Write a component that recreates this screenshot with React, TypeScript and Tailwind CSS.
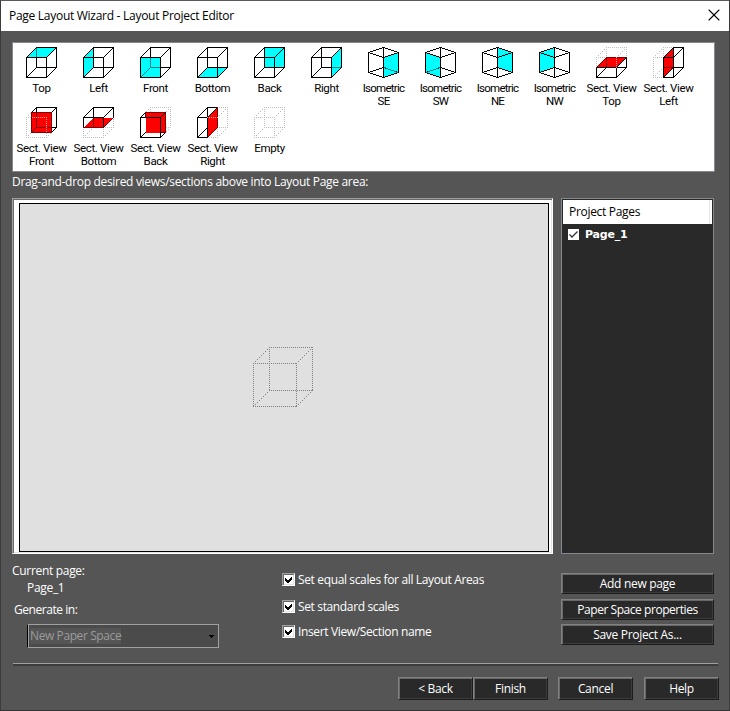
import { type ReactNode } from "react";
import { X } from "lucide-react";

type Line = [number, number, number, number];
type IconProps = { fill?: string; solid?: Line[]; dotted?: Line[]; over?: Line[]; overColor?: string; marks?: Line[]; color?: string };

// wireframe drawn on a 31px grid: front face 0,10-20,30 and back face 10,0-30,20
const cube: Line[] = [
  [0, 10, 20, 10], [20, 10, 20, 30], [0, 30, 20, 30], [0, 10, 0, 30],
  [10, 0, 30, 0], [30, 0, 30, 20], [10, 20, 30, 20], [10, 0, 10, 20],
  [0, 10, 10, 0], [20, 10, 30, 0], [20, 30, 30, 20], [0, 30, 10, 20],
];

const iso: Line[] = [
  [0, 5, 15, 0], [30, 5, 15, 0], [30, 5, 15, 10], [0, 5, 15, 10],
  [0, 25, 15, 20], [30, 25, 15, 20], [30, 25, 15, 30], [0, 25, 15, 30],
  [0, 5, 0, 25], [30, 5, 30, 25], [15, 0, 15, 30],
];

const bigCube: Line[] = [
  [0, 16, 43, 16], [43, 16, 43, 59], [0, 59, 43, 59], [0, 16, 0, 59],
  [16, 0, 59, 0], [59, 0, 59, 43], [16, 43, 59, 43], [16, 0, 16, 43],
  [0, 16, 16, 0], [43, 16, 59, 0], [43, 59, 59, 43], [0, 59, 16, 43],
];

// unsmoothed one pixel lines; step 2 leaves every other pixel out
const toPixels = (lines: Line[], step = 1) => {
  let d = "";
  for (const [x1, y1, x2, y2] of lines) {
    const n = Math.max(Math.abs(x2 - x1), Math.abs(y2 - y1));
    for (let i = 0; i <= n; i += step) {
      d += `M${Math.round(x1 + ((x2 - x1) * i) / n)} ${Math.round(y1 + ((y2 - y1) * i) / n)}h1v1h-1z`;
    }
  }
  return d;
};

const WireIcon = ({ fill, solid = [], dotted = [], over = [], overColor = "#008080", marks = [], color = "#f00" }: IconProps) => (
  <svg width="31" height="31" viewBox="0 0 31 31" shapeRendering="crispEdges" className="shrink-0">
    <path d={toPixels(dotted, 2)} fill="#c0c0c0" />
    {fill && <polygon points={fill} fill={color} transform="translate(0.5 0.5)" />}
    <path d={toPixels(solid)} fill="#000" />
    <path d={toPixels(over)} fill={overColor} />
    <path d={toPixels(marks, 2)} fill="#ffa0a0" />
  </svg>
);

const cyan = "#0ff";

const views: { label: string; icon: ReactNode }[] = [
  { label: "Top", icon: <WireIcon color={cyan} fill="0,10 10,0 30,0 20,10" solid={cube} over={[[10, 1, 10, 9]]} /> },
  { label: "Left", icon: <WireIcon color={cyan} fill="0,10 10,0 10,20 0,30" solid={cube} /> },
  { label: "Front", icon: <WireIcon color={cyan} fill="0,10 20,10 20,30 0,30" solid={cube} over={[[10, 11, 10, 20], [10, 20, 19, 20], [1, 29, 10, 20]]} /> },
  { label: "Bottom", icon: <WireIcon color={cyan} fill="0,30 10,20 30,20 20,30" solid={cube} /> },
  { label: "Back", icon: <WireIcon color={cyan} fill="10,0 30,0 30,20 10,20" solid={cube} /> },
  { label: "Right", icon: <WireIcon color={cyan} fill="20,10 30,0 30,20 20,30" solid={cube} over={[[21, 20, 29, 20]]} /> },
  { label: "Isometric SE", icon: <WireIcon color={cyan} fill="15,10 30,5 30,25 15,30" solid={iso} over={[[16, 20, 29, 25]]} /> },
  { label: "Isometric SW", icon: <WireIcon color={cyan} fill="0,5 15,10 15,30 0,25" solid={iso} over={[[1, 25, 14, 20]]} /> },
  { label: "Isometric NE", icon: <WireIcon color={cyan} fill="15,0 30,5 30,25 15,20" solid={iso} /> },
  { label: "Isometric NW", icon: <WireIcon color={cyan} fill="15,0 0,5 0,25 15,20" solid={iso} /> },
  {
    label: "Sect. View Top",
    icon: <WireIcon fill="0,20 10,10 30,10 20,20" dotted={cube} overColor="#800000" over={[[10, 11, 10, 19], [10, 10, 30, 10], [0, 20, 10, 10]]} marks={[[20, 10, 20, 20]]}
      solid={[[0, 20, 30, 20], [0, 20, 0, 30], [0, 30, 20, 30], [20, 20, 20, 30], [20, 30, 30, 20], [30, 10, 30, 20], [20, 20, 30, 10], [0, 30, 10, 20]]} />,
  },
  {
    label: "Sect. View Left",
    icon: <WireIcon fill="10,10 20,0 20,20 10,30" dotted={cube} overColor="#800000" over={[[11, 20, 19, 20]]}
      solid={[[20, 0, 30, 0], [30, 0, 30, 20], [10, 10, 20, 10], [20, 10, 20, 30], [10, 30, 20, 30], [10, 10, 10, 30], [10, 10, 20, 0], [20, 10, 30, 0], [20, 30, 30, 20], [20, 20, 30, 20], [20, 0, 20, 20], [10, 30, 20, 20]]} />,
  },
  {
    label: "Sect. View Front",
    icon: <WireIcon fill="5,5 25,5 25,25 5,25" dotted={cube} overColor="#800000" over={[[10, 6, 10, 20], [10, 20, 25, 20], [5, 25, 10, 20], [5, 5, 25, 5], [5, 5, 5, 25], [5, 25, 25, 25], [25, 5, 25, 25]]} marks={[[6, 10, 20, 10], [20, 10, 20, 24]]}
      solid={[[10, 0, 30, 0], [30, 0, 30, 20], [10, 0, 10, 5], [5, 5, 10, 0], [25, 5, 30, 0], [25, 25, 30, 20], [25, 20, 30, 20]]} />,
  },
  {
    label: "Sect. View Bottom",
    icon: <WireIcon fill="0,20 10,10 30,10 20,20" dotted={cube} overColor="#800000" over={[[10, 11, 10, 19], [0, 20, 20, 20], [20, 20, 30, 10]]}
      solid={[[0, 10, 20, 10], [10, 0, 30, 0], [0, 10, 0, 20], [20, 10, 20, 20], [30, 0, 30, 10], [10, 0, 10, 10], [0, 10, 10, 0], [20, 10, 30, 0]]} />,
  },
  {
    label: "Sect. View Back",
    icon: <WireIcon fill="5,5 25,5 25,25 5,25" dotted={cube} overColor="#800000" over={[[5, 5, 25, 5], [25, 5, 25, 25], [5, 5, 5, 9], [21, 25, 25, 25]]}
      solid={[[0, 10, 20, 10], [20, 10, 20, 30], [0, 30, 20, 30], [0, 10, 0, 30], [0, 10, 5, 5], [20, 10, 25, 5], [20, 30, 25, 25], [0, 30, 5, 25]]} />,
  },
  {
    label: "Sect. View Right",
    icon: <WireIcon fill="10,10 20,0 20,20 10,30" dotted={cube} overColor="#800000" over={[[20, 0, 20, 20], [10, 30, 20, 20]]} marks={[[10, 10, 20, 10]]}
      solid={[[0, 10, 10, 10], [0, 10, 0, 30], [0, 30, 10, 30], [10, 0, 20, 0], [0, 10, 10, 0], [10, 10, 20, 0], [10, 0, 10, 30], [0, 30, 10, 20]]} />,
  },
  { label: "Empty", icon: <WireIcon dotted={cube} /> },
];

const Button = ({ children, className = "" }: { children: ReactNode; className?: string }) => (
  <button className={`flex items-center justify-center bg-[#292929] border border-t-[#828282] border-l-[#828282] border-r-[#1c1c1c] border-b-[#1c1c1c] shadow-[inset_1px_1px_0_#686868,inset_-1px_-1px_0_#3c3c3c] ${className}`}>
    {children}
  </button>
);

const CheckOption = ({ label }: { label: string }) => (
  <label className="flex items-center gap-[3px] h-[17px] tracking-[-0.36px]">
    <span className="w-[13px] h-[13px] bg-white border border-t-[#a0a0a0] border-l-[#a0a0a0] border-r-white border-b-white shadow-[inset_1px_1px_0_#696969,inset_-1px_-1px_0_#e3e3e3]">
      <svg width="11" height="11" viewBox="0 0 11 11" shapeRendering="crispEdges">
        <path d="M2 4v3l2 2h1l4-4V2L5 6H4Z" fill="#000" />
      </svg>
    </span>
    {label}
  </label>
);

const App = () => (
  <main className="w-[730px] h-[711px] overflow-hidden bg-[#555555] border border-t-[#5a5a5a] border-l-[#3c3c3c] border-r-[#3c3c3c] border-b-[#333333] text-white text-[12px] leading-[16px] font-['Open_Sans','Noto_Sans',sans-serif] tracking-[-0.31px]">
    <header className="h-[30px] bg-white text-black flex items-center justify-between pl-2 pr-[5px]">
      <h1 className="tracking-[-0.28px]">Page Layout Wizard - Layout Project Editor</h1>
      <X size={20} strokeWidth={1.3} className="mb-[2px]" />
    </header>

    <section className="ml-[11px] mt-[11px] w-[703px] h-[130px] bg-white border border-[#828790] flex flex-wrap content-start pt-1 text-black">
      {views.map(({ label, icon }) => (
        <div key={label} className="w-[57px] h-[60px] flex flex-col items-center">
          {icon}
          <span className={`mt-1 w-[54px] text-center font-['Roboto',sans-serif] text-[11.5px] leading-[13px] ${label.startsWith("Iso") ? "tracking-[-0.75px]" : "tracking-[-0.35px]"}`}>{label}</span>
        </div>
      ))}
    </section>

    <p className="ml-[11px] mt-[2px] h-[16px]">Drag-and-drop desired views/sections above into Layout Page area:</p>

    <div className="ml-[11px] mt-[8px] flex gap-[8px] h-[356px]">
      <div className="w-[541px] bg-white border border-t-[#a0a0a0] border-l-[#a0a0a0] border-r-white border-b-white pt-1 pl-[6px] shadow-[inset_1px_1px_0_#696969,inset_-1px_-1px_0_#e3e3e3]">
        <div className="h-[349px] w-[530px] border border-black bg-[#e0e0e0] flex items-center justify-center">
          <svg width="60" height="60" viewBox="0 0 60 60" shapeRendering="crispEdges" className="mr-[2px] mb-px">
            <path d={toPixels(bigCube, 2)} fill="#808080" />
          </svg>
        </div>
      </div>
      <aside className="w-[153px] bg-[#292929] border border-[#828790] p-px">
        <div className="h-[24px] bg-white text-black flex items-center pl-[6px]">
          Project Pages
          <span className="ml-auto mr-[2px] w-px h-full bg-[#e5e5e5]" />
        </div>
        <div className="flex items-center gap-[6px] h-[20px] pl-[5px] font-bold font-['DejaVu_Sans',sans-serif] text-[11px] tracking-[-0.2px]">
          <span className="w-[11px] h-[11px] bg-white">
            <svg width="11" height="11" viewBox="0 0 11 11" fill="none"><path d="M1.5 5.5 4 8l5.500-5.500" stroke="#333" strokeWidth="1.300" /></svg>
          </span>
          <span className="pt-px">Page_1</span>
        </div>
      </aside>
    </div>

    <div className="ml-[11px] mt-[9px] flex h-[100px]">
      <div className="w-[270px]">
        <p>Current page:</p>
        <p className="pl-[15px] mt-px">Page_1</p>
        <p className="pl-[2px] mt-[6px] tracking-[-0.45px]">Generate in:</p>
        <div className="ml-[15px] mt-[6px] w-[192px] h-[24px] bg-[#4b4b4b] border border-[#a0a0a0] border-l-black shadow-[inset_1px_0_0_#a0a0a0] flex items-center justify-between pl-[2px] pr-[4px] text-[#9b9b9b]">
          <span className="bg-[#555555] tracking-[-0.4px]">New Paper Space</span>
          <svg width="5" height="3" shapeRendering="crispEdges"><path d="M0 0h5L2.500 3Z" fill="#000" /></svg>
        </div>
      </div>
      <div className="w-[279px] pt-[8px]">
        <CheckOption label="Set equal scales for all Layout Areas" />
        <div className="h-[10px]" />
        <CheckOption label="Set standard scales" />
        <div className="h-[8px]" />
        <CheckOption label="Insert View/Section name" />
      </div>
      <div className="w-[153px] pt-[10px] flex flex-col">
        <Button className="h-[21px]">Add new page</Button>
        <Button className="h-[21px] mt-[5px] tracking-[-0.45px]">Paper Space properties</Button>
        <Button className="h-[21px] mt-1">Save Project As...</Button>
      </div>
    </div>

    <div className="ml-3 w-[705px] h-[3px] bg-[#3c3c3c] border-t border-t-[#a0a0a0]" />
    <footer className="flex mt-[11px] ml-[397px]">
      <Button className="w-[75px] h-[23px]">&lt; Back</Button>
      <Button className="w-[75px] h-[23px]">Finish</Button>
      <Button className="w-[75px] h-[23px] ml-[10px]">Cancel</Button>
      <Button className="w-[75px] h-[23px] ml-[11px]">Help</Button>
    </footer>
  </main>
);

export default App;
